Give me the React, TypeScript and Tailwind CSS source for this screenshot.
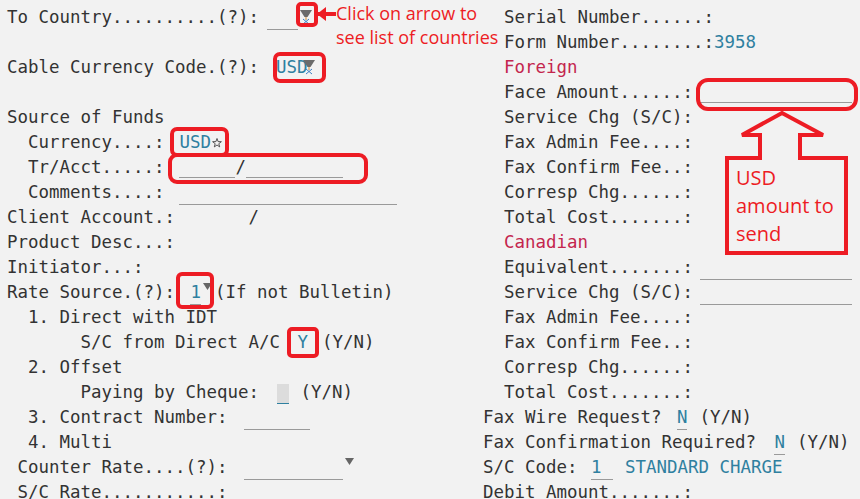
import type { ReactNode } from "react";

const Row = ({ children }: { children?: ReactNode }) => (
  <div className="flex h-[25px] items-center whitespace-pre">{children}</div>
);

const Teal = ({ children }: { children: ReactNode }) => (
  <span className="text-[#2f80a0]">{children}</span>
);

const Crimson = ({ children }: { children: ReactNode }) => (
  <span className="ml-[21px] text-[#c4264e]">{children}</span>
);

// little grey drop arrow used by the lookup fields
const DropIcon = () => (
  <svg width="16" height="20" viewBox="0 0 16 20" className="self-start mt-[2px]">
    <path d="M2 3 H14 L9.5 10 H6.5 Z" fill="#6b6b6b" />
    <path d="M5 17 L11 12 M5 12 L11 17" stroke="#3b7fc4" strokeWidth="1" />
    <path d="M8 10 V13" stroke="#d08a30" strokeWidth="1" />
  </svg>
);

const Caret = () => (
  <svg width="9" height="8" viewBox="0 0 9 8" className="self-start mt-[3px]">
    <path d="M0 0 H9 L4.5 7 Z" fill="#666" />
  </svg>
);

const Star = () => (
  <svg width="10" height="10" viewBox="0 0 10 10" className="ml-[1px]">
    <path
      d="M5 0.5 L6.1 3.6 L9.4 3.7 L6.8 5.7 L7.7 8.9 L5 7 L2.3 8.9 L3.2 5.7 L0.6 3.7 L3.9 3.6 Z"
      fill="none"
      stroke="#444"
      strokeWidth="0.9"
    />
  </svg>
);

const LeftColumn = () => (
  <div className="w-[483px] shrink-0 pl-[7px]">
    <Row>
      To Country..........(?):
      <span className="self-stretch ml-[8px] w-[31px] border-b border-[#9a9a9a]" />
      <DropIcon />
    </Row>
    <Row />
    <Row>
      Cable Currency Code.(?):
      <span className="self-stretch ml-[17px] flex items-center border-b border-[#9a9a9a]">
        <Teal>USD</Teal>
      </span>
      <span className="-ml-[6px] self-stretch flex">
        <DropIcon />
      </span>
    </Row>
    <Row />
    <Row>Source of Funds</Row>
    <Row>
      {"  Currency....:"}
      <span className="ml-[15px] flex items-center">
        <Teal>USD</Teal>
        <Star />
      </span>
    </Row>
    <Row>
      {"  Tr/Acct.....:"}
      <span className="self-stretch ml-[15px] mb-[2px] w-[56px] border-b border-[#9a9a9a]" />
      /
      <span className="self-stretch mb-[2px] w-[97px] border-b border-[#9a9a9a]" />
    </Row>
    <Row>
      {"  Comments....:"}
      <span className="self-stretch ml-[15px] w-[218px] border-b border-[#9a9a9a]" />
    </Row>
    <Row>{"Client Account.:       /"}</Row>
    <Row>Product Desc...:</Row>
    <Row>Initiator...:</Row>
    <Row>
      {"Rate Source.(?): "}
      <span className="self-stretch ml-[5px] flex items-center border-b border-[#9a9a9a]">
        <Teal>1</Teal>
      </span>
      <span className="ml-[2px] self-stretch flex">
        <Caret />
      </span>
      <span className="ml-[3px]">(If not Bulletin)</span>
    </Row>
    <Row>{"  1. Direct with IDT"}</Row>
    <Row>
      {"       S/C from Direct A/C "}
      <span className="self-stretch ml-[7px] flex items-center border-b border-[#9a9a9a]">
        <Teal>Y</Teal>
      </span>
      <span className="ml-[14px]">(Y/N)</span>
    </Row>
    <Row>{"  2. Offset"}</Row>
    <Row>
      {"       Paying by Cheque: "}
      <span className="ml-[8px] h-[20px] w-[12px] mt-[3px] bg-[#dcdcdc] border-b border-[#2f80a0]" />
      <span className="ml-[11px]">(Y/N)</span>
    </Row>
    <Row>
      {"  3. Contract Number: "}
      <span className="self-stretch ml-[6px] w-[66px] border-b border-[#9a9a9a]" />
    </Row>
    <Row>{"  4. Multi"}</Row>
    <Row>
      {" Counter Rate....(?): "}
      <span className="self-stretch ml-[6px] w-[99px] border-b border-[#9a9a9a]" />
      <span className="ml-[2px] self-stretch flex">
        <Caret />
      </span>
    </Row>
    <Row>{" S/C Rate...........:"}</Row>
  </div>
);

const RightColumn = () => (
  <div className="flex-1">
    <Row>{"  Serial Number......:"}</Row>
    <Row>
      {"  Form Number........:"}
      <Teal>3958</Teal>
    </Row>
    <Row>
      <Crimson>Foreign</Crimson>
    </Row>
    <Row>
      {"  Face Amount......:"}
      <span className="self-stretch ml-[7px] mb-[2px] w-[152px] border-b border-[#9a9a9a]" />
    </Row>
    <Row>{"  Service Chg (S/C):"}</Row>
    <Row>{"  Fax Admin Fee....:"}</Row>
    <Row>{"  Fax Confirm Fee..:"}</Row>
    <Row>{"  Corresp Chg......:"}</Row>
    <Row>{"  Total Cost.......:"}</Row>
    <Row>
      <Crimson>Canadian</Crimson>
    </Row>
    <Row>
      {"  Equivalent.......:"}
      <span className="self-stretch ml-[7px] w-[152px] border-b border-[#9a9a9a]" />
    </Row>
    <Row>
      {"  Service Chg (S/C):"}
      <span className="self-stretch ml-[7px] w-[152px] border-b border-[#9a9a9a]" />
    </Row>
    <Row>{"  Fax Admin Fee....:"}</Row>
    <Row>{"  Fax Confirm Fee..:"}</Row>
    <Row>{"  Corresp Chg......:"}</Row>
    <Row>{"  Total Cost.......:"}</Row>
    <Row>
      {"Fax Wire Request? "}
      <span className="self-stretch ml-[5px] flex items-center border-b border-[#9a9a9a]">
        <Teal>N</Teal>
      </span>
      <span className="ml-[12px]">(Y/N)</span>
    </Row>
    <Row>
      {"Fax Confirmation Required? "}
      <span className="self-stretch ml-[8px] flex items-center border-b border-[#9a9a9a]">
        <Teal>N</Teal>
      </span>
      <span className="ml-[12px]">(Y/N)</span>
    </Row>
    <Row>
      {"S/C Code: "}
      <span className="self-stretch ml-[3px] w-[22px] flex items-center border-b border-[#9a9a9a]">
        <Teal>1</Teal>
      </span>
      <span className="ml-[12px]">
        <Teal>STANDARD CHARGE</Teal>
      </span>
    </Row>
    <Row>Debit Amount.......:</Row>
  </div>
);

// red markup drawn over the screen capture
const Annotations = () => (
  <>
    <div className="absolute left-[296px] top-[2px] h-[25px] w-[22px] rounded-[5px] border-[4px] border-[#ed1c24]" />
    <div className="absolute left-[273px] top-[52px] h-[31px] w-[53px] rounded-[7px] border-[4px] border-[#ed1c24]" />
    <div className="absolute left-[170px] top-[127px] h-[30px] w-[59px] rounded-[7px] border-[4px] border-[#ed1c24]" />
    <div className="absolute left-[168px] top-[153px] h-[31px] w-[200px] rounded-[9px] border-[4px] border-[#ed1c24]" />
    <div className="absolute left-[176px] top-[272px] h-[37px] w-[38px] rounded-[6px] border-[4px] border-[#ed1c24]" />
    <div className="absolute left-[287px] top-[327px] h-[31px] w-[32px] rounded-[5px] border-[4px] border-[#ed1c24]" />
    <div className="absolute left-[696px] top-[78px] h-[33px] w-[162px] rounded-[12px] border-[4px] border-[#ed1c24]" />

    <svg className="absolute left-0 top-0" width="860" height="499">
      <path d="M318 14 H336" stroke="#ed1c24" strokeWidth="4" />
      <path d="M317 14 L326 7 L326 21 Z" fill="#ed1c24" />
      <path
        d="M782 113 L823 135 L800 135 L800 158 L846 158 L846 253 L727 253 L727 158 L760 158 L760 135 L742 135 Z"
        fill="none"
        stroke="#ed1c24"
        strokeWidth="4"
        strokeLinejoin="miter"
      />
    </svg>

    <div className="absolute left-[336px] top-[1px] font-['Open_Sans',sans-serif] text-[18px] leading-[24px] text-[#ed1c24]">
      <div>Click on arrow to</div>
      <div>see list of countries</div>
    </div>
    <div className="absolute left-[736px] top-[164px] font-['Open_Sans',sans-serif] text-[20px] leading-[28px] text-[#ed1c24]">
      <div>USD</div>
      <div>amount to</div>
      <div>send</div>
    </div>
  </>
);

export default function App() {
  return (
    <div className="relative h-[499px] w-[860px] overflow-hidden bg-[#f2f2f2] font-['DejaVu_Sans_Mono',monospace] text-[17.44px] text-[#333333]">
      <div className="flex pt-[5px]">
        <LeftColumn />
        <RightColumn />
      </div>
      <Annotations />
    </div>
  );
}
